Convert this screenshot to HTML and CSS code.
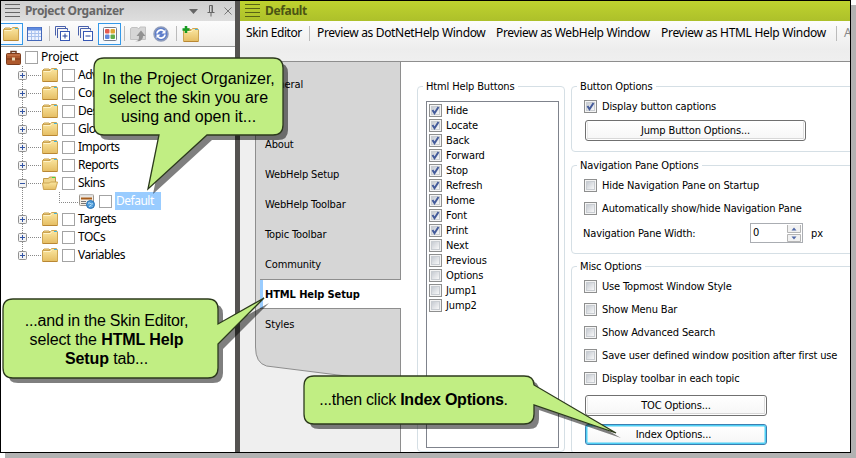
FILE: index.html
```html
<!DOCTYPE html>
<html lang="en">
<head>
<meta charset="utf-8">
<title>Skin Editor</title>
<link rel="stylesheet" href="styles.css">
</head>
<body>
<svg class="defs" aria-hidden="true">
  <defs>
    <linearGradient id="gold" x1="0" y1="0" x2="0" y2="1"><stop offset="0" stop-color="#fbe7a2"/><stop offset="1" stop-color="#e5bd62"/></linearGradient>
    <linearGradient id="box" x1="0" y1="0" x2="1" y2="1"><stop offset="0" stop-color="#c3c8cf"/><stop offset="1" stop-color="#fbfbfb"/></linearGradient>
    <symbol id="folder" viewBox="0 0 16 14"><path d="M.5 2.500 2 1h5l1.500 1.500" fill="#f3d88c" stroke="#c8a04c"/><path d="M8 2.500 9.500.5h5L15.500 2v11.500H.5v-11z" fill="url(#gold)" stroke="#cda552"/><path d="M1.500 3.500h7l1.500-2" fill="none" stroke="#fff3c8"/><path d="M12 1.500h3" stroke="#43b4dc"/><path d="M1 13.500h14" stroke="#b98734"/></symbol>
    <symbol id="open" viewBox="0 0 16 14"><path d="M1.500 12V2.500h5l1-1.500h6v5" fill="#efd58c" stroke="#c39c48"/><path d="M10 1.500h3" stroke="#3bdc45"/><path d="m.5 7 1 6.500h12l2-7.500H8.500l-1 1z" fill="url(#gold)" stroke="#cda552"/></symbol>
    <symbol id="unchecked" viewBox="0 0 13 13"><rect x=".5" y=".5" width="12" height="12" fill="#f4f4f4" stroke="#8e8f8f"/><rect x="2.500" y="2.500" width="8" height="8" fill="url(#box)" stroke="#c9cdd2"/></symbol>
    <symbol id="checked" viewBox="0 0 13 13"><use href="#unchecked"/><path d="m3.500 6 2 3.200L9.500 3" fill="none" stroke="#435a9a" stroke-width="2"/></symbol>
    <symbol id="plus" viewBox="0 0 9 9"><rect x=".5" y=".5" width="8" height="8" rx="1" fill="#f3f3f3" stroke="#919191"/><path d="M2 4.500h5M4.500 2v5" stroke="#3355a5"/></symbol>
    <symbol id="minus" viewBox="0 0 9 9"><rect x=".5" y=".5" width="8" height="8" rx="1" fill="#f3f3f3" stroke="#919191"/><path d="M2 4.500h5" stroke="#3355a5"/></symbol>
    <symbol id="pages" viewBox="0 0 16 16"><path d="M.5 9.500v-9h10v2M2.500 12V2.500h10v2" fill="none" stroke="#4961ac"/><rect x="5.500" y="5.500" width="9" height="9" fill="#fff" stroke="#3657b3"/><path d="M7.500 10h5" stroke="#234098"/></symbol>
  </defs>
</svg>
<div class="window">
  <section class="organizer">
    <header class="bar">
      <i class="grip"></i><b>Project Organizer</b>
      <svg class="caret" viewBox="0 0 9 5"><path d="M0 0h9L4.500 5z"/></svg>
      <svg class="pin" viewBox="0 0 8 12"><path d="M2.500 7V.5h3V7M5 1v6M.5 7.500h7M4 8v3.500" /></svg>
      <svg class="close" viewBox="0 0 8 8"><path d="m.5.5 7 7m0-7-7 7"/></svg>
    </header>
    <div class="tools">
      <span class="tool on first"><svg width="16" height="14"><use href="#folder"/></svg></span>
      <svg class="table" width="15" height="14" viewBox="0 0 15 14"><rect x=".5" y=".5" width="14" height="13" fill="#eef3ff" stroke="#4468b9"/><path d="M1 2h13" stroke="#5f8be0" stroke-width="3"/><path d="M4.500 3v10M8 3v10M11.500 3v10M1 6.500h13M1 9.500h13" stroke="#a9c1ed"/></svg>
      <i class="sep s1"></i>
      <svg class="pg1" width="16" height="16" viewBox="0 0 16 16"><use href="#pages"/><path d="M10 7.500v5" stroke="#234098"/></svg>
      <svg class="pg2" width="16" height="16"><use href="#pages"/></svg>
      <span class="tool on grid"><svg width="14" height="14" viewBox="0 0 14 14"><rect x=".5" y=".5" width="13" height="13" rx="1" fill="#fff" stroke="#747c8b"/><rect x="2" y="2" width="4.500" height="4.500" rx="1" fill="#e45a50"/><rect x="7.500" y="2" width="4.500" height="4.500" rx="1" fill="#dfa534"/><rect x="2" y="7.500" width="4.500" height="4.500" rx="1" fill="#6087dc"/><rect x="7.500" y="7.500" width="4.500" height="4.500" rx="1" fill="#61ad4c"/></svg></span>
      <i class="sep s2"></i>
      <svg class="up" width="17" height="16" viewBox="0 0 17 16"><path d="M.5 2.500 2 1.500h5l2 1.500 1-2h5.500v12.500H.5z" fill="#d6d6d6" stroke="#c2c2c2"/><path d="M5 15c4 0 4-2 4-5H6.500L11 4.500l4.500 5.500H13c0 4-3 6-8 5z" fill="#929292"/></svg>
      <svg class="sync" width="16" height="16" viewBox="0 0 16 16"><circle cx="8" cy="8" r="7" fill="#5d7dcb" stroke="#8e9bb9" stroke-width="1.500"/><path d="M4 7.500C4.500 3.500 9 3 11 5.500M12 8.500c-.5 4-5 4.500-7 2" fill="none" stroke="#fff" stroke-width="1.700"/><path d="M12.500 3.500v4h-4zM3.500 12.500v-4h4z" fill="#fff"/></svg>
      <i class="sep s3"></i>
      <svg class="new" width="17" height="16" viewBox="0 0 17 16"><use href="#folder" x="1" y="2" width="16" height="14"/><path d="M4 0v7M.5 3.500h7" stroke="#169b22" stroke-width="2.500"/></svg>
    </div>
    <div class="tree">
      <div class="root"><svg width="15" height="15" viewBox="0 0 15 15"><path d="M5 4V1.500h5V4" fill="none" stroke="#6c3c22" stroke-width="1.500"/><rect x=".5" y="3.500" width="14" height="11" rx="1" fill="#ad582c" stroke="#7d3c1d"/><path d="M1 5h13" stroke="#cf8356"/><path d="M1 9h13" stroke="#713416"/><path d="M6 7.500h3v3H6z" fill="#ead7b2"/></svg><i class="cb"></i><span>Project</span></div>
      <div class="branch">
        <div class="node"><svg class="exp"><use href="#plus"/></svg><i class="dots"></i><svg class="fold"><use href="#folder"/></svg><i class="cb"></i><span>Adv</span></div>
        <div class="node"><svg class="exp"><use href="#plus"/></svg><i class="dots"></i><svg class="fold"><use href="#folder"/></svg><i class="cb"></i><span>Con</span></div>
        <div class="node"><svg class="exp"><use href="#plus"/></svg><i class="dots"></i><svg class="fold"><use href="#folder"/></svg><i class="cb"></i><span>Des</span></div>
        <div class="node"><svg class="exp"><use href="#plus"/></svg><i class="dots"></i><svg class="fold"><use href="#folder"/></svg><i class="cb"></i><span>Glo</span></div>
        <div class="node"><svg class="exp"><use href="#plus"/></svg><i class="dots"></i><svg class="fold"><use href="#folder"/></svg><i class="cb"></i><span>Imports</span></div>
        <div class="node"><svg class="exp"><use href="#plus"/></svg><i class="dots"></i><svg class="fold"><use href="#folder"/></svg><i class="cb"></i><span>Reports</span></div>
        <div class="node"><svg class="exp"><use href="#minus"/></svg><i class="dots"></i><svg class="fold"><use href="#open"/></svg><i class="cb"></i><span>Skins</span></div>
        <div class="leaf"><i class="elbow"></i><svg width="16" height="16" viewBox="0 0 16 16"><rect x=".5" y="1.500" width="14" height="11" rx="1" fill="#f5efe6" stroke="#9a948c"/><path d="M1 2.500h13" stroke="#ddd" stroke-width="2"/><path d="M2 5.500h11" stroke="#a65c1c" stroke-width="2"/><path d="M2 8.500h5M2 10.500h5" stroke="#777"/><circle cx="11.500" cy="11.500" r="4" fill="#4d9bd8" stroke="#2c73b4"/><path d="M9 10.500c2-2 3 2 5 0M10 13.500l2-1 1 1" fill="none" stroke="#d6f0ff"/></svg><i class="cb"></i><span class="sel">Default</span></div>
        <div class="node"><svg class="exp"><use href="#plus"/></svg><i class="dots"></i><svg class="fold"><use href="#folder"/></svg><i class="cb"></i><span>Targets</span></div>
        <div class="node"><svg class="exp"><use href="#plus"/></svg><i class="dots"></i><svg class="fold"><use href="#folder"/></svg><i class="cb"></i><span>TOCs</span></div>
        <div class="node"><svg class="exp"><use href="#plus"/></svg><i class="dots"></i><svg class="fold"><use href="#folder"/></svg><i class="cb"></i><span>Variables</span></div>
      </div>
    </div>
  </section>
  <div class="splitter"></div>
  <section class="editor">
    <header class="bar green"><i class="grip"></i><b>Default</b></header>
    <nav class="commands"><span class="c1">Skin Editor</span><i></i><span class="c2">Preview as DotNetHelp Window</span><span class="c3">Preview as WebHelp Window</span><span class="c4">Preview as HTML Help Window</span><i></i><span class="dim">A</span></nav>
    <div class="body">
      <div class="tabs">
        <svg class="tabshape" width="161" height="390" viewBox="0 0 161 390"><path d="M15.500-1v286q0 16 11 19L110 314.500l50.500 6V-1z" fill="#d6d6d6" stroke="#8e8e8e"/><path d="M160.500 310v80" stroke="#8e8e8e"/></svg>
        <div class="tablist"><span>General</span><span class="blank"></span><span>About</span><span class="t4">WebHelp Setup</span><span class="t5">WebHelp Toolbar</span><span class="t6">Topic Toolbar</span><span>Community</span><span class="active">HTML Help Setup</span><span>Styles</span></div>
      </div>
      <div class="page">
        <fieldset class="buttons"><legend>Html Help Buttons</legend>
          <div class="list">
            <label><svg><use href="#checked"/></svg>Hide</label><label><svg><use href="#checked"/></svg>Locate</label><label><svg><use href="#checked"/></svg>Back</label><label><svg><use href="#checked"/></svg>Forward</label><label><svg><use href="#checked"/></svg>Stop</label><label><svg><use href="#checked"/></svg>Refresh</label><label><svg><use href="#checked"/></svg>Home</label><label><svg><use href="#checked"/></svg>Font</label><label><svg><use href="#checked"/></svg>Print</label><label><svg><use href="#unchecked"/></svg>Next</label><label><svg><use href="#unchecked"/></svg>Previous</label><label><svg><use href="#unchecked"/></svg>Options</label><label><svg><use href="#unchecked"/></svg>Jump1</label><label><svg><use href="#unchecked"/></svg>Jump2</label>
          </div>
        </fieldset>
        <div class="options">
          <fieldset class="g1"><legend>Button Options</legend>
            <label><svg><use href="#checked"/></svg>Display button captions</label>
            <div class="btn wide">Jump Button Options...</div>
          </fieldset>
          <fieldset class="g2"><legend>Navigation Pane Options</legend>
            <label><svg><use href="#unchecked"/></svg>Hide Navigation Pane on Startup</label>
            <label><svg><use href="#unchecked"/></svg>Automatically show/hide Navigation Pane</label>
            <div class="width"><span class="wl">Navigation Pane Width:</span><span class="spin">0<svg width="15" height="17" viewBox="0 0 15 17"><path d="M.5 0v7.500h13V0M.5 9.500h13v7H.5z" fill="#f1f1f1" stroke="#b5b5b5"/><path d="m4.500 5.500 2.500-3 2.500 3zM4.500 11.500l2.500 3 2.500-3z" fill="#5169a8"/></svg></span><span>px</span></div>
          </fieldset>
          <fieldset class="g3"><legend>Misc Options</legend>
            <label><svg><use href="#unchecked"/></svg>Use Topmost Window Style</label>
            <label><svg><use href="#unchecked"/></svg>Show Menu Bar</label>
            <label><svg><use href="#unchecked"/></svg>Show Advanced Search</label>
            <label><svg><use href="#unchecked"/></svg>Save user defined window position after first use</label>
            <label><svg><use href="#unchecked"/></svg>Display toolbar in each topic</label>
            <div class="btn">TOC Options...</div>
            <div class="btn focus">Index Options...</div>
          </fieldset>
        </div>
      </div>
    </div>
  </section>
</div>
<div class="callout one">
  <svg width="200" height="145"><path class="sh" d="M11 1H180q10 0 10 10V68q0 10-10 10H114L55 132 66 78H11Q1 78 1 68V11Q1 1 11 1z"/><path class="sp" d="M11 1H180q10 0 10 10V68q0 10-10 10H114L55 132 66 78H11Q1 78 1 68V11Q1 1 11 1z"/></svg>
  <p><span class="a1">In the Project Organizer,</span><br><span class="a2">select the skin you are</span><br><span class="a3">using and open it...</span></p>
</div>
<div class="callout two">
  <svg width="275" height="90"><path class="sh" d="M11 1H206q10 0 10 10V26L262 0 216 46V70q0 10-10 10H11Q1 80 1 70V11Q1 1 11 1z"/><path class="sp" d="M11 1H206q10 0 10 10V26L262 0 216 46V70q0 10-10 10H11Q1 80 1 70V11Q1 1 11 1z"/></svg>
  <p><span class="b1">...and in the Skin Editor,</span><br><span class="b2">select the <b>HTML Help</b></span><br><span class="b3"><b>Setup</b> tab...</span></p>
</div>
<div class="callout three">
  <svg width="325" height="70"><path class="sh" d="M11 1H221q10 0 10 9L313 58 231 30V39q0 10-10 10H11Q1 49 1 39V11Q1 1 11 1z"/><path class="sp" d="M11 1H221q10 0 10 9L313 58 231 30V39q0 10-10 10H11Q1 49 1 39V11Q1 1 11 1z"/></svg>
  <p>...then click <b>Index Options</b>.</p>
</div>
</body>
</html>
```
FILE: styles.css
```css
* { box-sizing: border-box; }
body { margin: 0; width: 856px; height: 458px; overflow: hidden; position: relative; background: #fff; color: #000; font: 11px/15px "DejaVu Sans Condensed", "DejaVu Sans", sans-serif; font-stretch: condensed; letter-spacing: -.14px; white-space: nowrap; }
svg { display: block; flex: none; }
i { display: block; flex: none; }
.defs { position: absolute; width: 0; height: 0; }
.window { display: flex; width: 851px; height: 453px; border: 1px solid #000; box-shadow: 5px 5px 0 #b2b2b2; overflow: hidden; background: #fff; }
.organizer { width: 234px; flex: none; font: 12px/18px "Noto Sans", sans-serif; }
.splitter { width: 5px; flex: none; background: #555351; }
.editor { width: 610px; flex: none; display: flex; flex-direction: column; }

.bar { height: 20px; flex: none; display: flex; align-items: center; background: linear-gradient(#cfcfcf, #dedede); color: #666; font: 12px/20px "Noto Sans", sans-serif; padding-left: 4px; }
.bar b { margin-left: 5px; width: 164px; letter-spacing: -.35px; }
.bar.green { background: linear-gradient(#bfd32f, #adc02a); color: #4b5413; padding-left: 5px; }
.grip { width: 15px; height: 14px; background: repeating-linear-gradient(#666 0 1px, transparent 1px 4px); }
.green .grip { background: repeating-linear-gradient(#596315 0 1px, transparent 1px 4px); }
.caret { width: 9px; height: 5px; fill: #666; }
.pin { width: 8px; height: 12px; margin-left: 9px; fill: none; stroke: #666; }
.close { width: 8px; height: 8px; margin-left: 9px; fill: none; stroke: #777; }

.tools { height: 26px; display: flex; align-items: center; background: linear-gradient(#fcfcfc, #efefef); border-bottom: 1px solid #999; }
.tool { display: flex; align-items: center; justify-content: center; height: 22px; width: 23px; border: 1px solid #3498e8; background: #f5faff; }
.first { width: 22px; border-left: 0; padding-right: 1px; }
.table { margin-left: 4px; }
.sep { width: 1px; height: 15px; background: #bbb; }
.s1 { margin-left: 7px; }
.pg1 { margin-left: 5px; }
.pg2 { margin-left: 7px; }
.grid { margin-left: 4px; }
.s2 { margin-left: 3px; }
.up { margin-left: 5px; }
.sync { margin-left: 6px; }
.s3 { margin-left: 7px; }
.new { margin-left: 5px; }

.tree { padding-top: 1px; }
.tree span { letter-spacing: -.5px; }
.root, .node, .leaf { display: flex; align-items: center; height: 18px; }
.root { padding-left: 5px; }
.root .cb { margin-left: 4px; }
.tree .root span { letter-spacing: -.25px; }
.cb { width: 13px; height: 13px; border: 1px solid #a3a3a3; background: #fff; margin: 1px 3px 0 4px; }
.branch { margin-left: 17px; background: repeating-linear-gradient(#888 0 1px, transparent 1px 2px) 4px 0 / 1px 190px no-repeat; }
.exp { width: 9px; height: 9px; margin-top: 1px; }
.dots { width: 13px; height: 1px; margin: 1px 1px 0 1px; background: repeating-linear-gradient(90deg, #888 0 1px, transparent 1px 2px); }
.fold { width: 16px; height: 14px; }
.leaf { padding-left: 41px; }
.elbow { width: 19px; height: 11px; align-self: flex-start; background: repeating-linear-gradient(#888 0 1px, transparent 1px 2px) 0 0 / 1px 11px no-repeat, repeating-linear-gradient(90deg, #888 0 1px, transparent 1px 2px) 0 10px / 19px 1px no-repeat; }
.leaf svg { margin-left: 1px; }
.sel { background: #99ccff; color: #fff; width: 46px; padding-left: 1px; height: 18px; }

.commands { height: 41px; padding: 0 0 16px 6px; flex: none; display: flex; align-items: center; background: linear-gradient(#fcfcfc, #ededed 70%, #efefef); border-bottom: 1px solid #8e8e8e; font: 12px/24px "Noto Sans", sans-serif; letter-spacing: -.33px; }
.commands span { flex: none; }
.commands i { width: 1px; height: 15px; background: #bbb; margin-right: 7px; }
.c1 { width: 63px; letter-spacing: -.4px; }
.c2 { width: 179px; }
.c3 { width: 165px; }
.c4 { width: 175px; letter-spacing: -.3px; }
.dim { color: #888; }
.body { flex: 1; display: flex; min-height: 0; }
.tabs { width: 161px; flex: none; position: relative; background: #efefef; }
.tabshape { position: absolute; left: 0; top: 0; }
.tablist { position: relative; padding: 7px 0 0 20px; display: grid; grid-auto-rows: 30px; line-height: 32px; }
.tablist span { padding-left: 5px; }
.tablist .active { background: #fff; border: solid #8e8e8e; border-width: 1px 0; box-shadow: inset 3px 0 #99ccff; font-weight: bold; height: 30px; line-height: 29px; letter-spacing: -.1px; }

.page { flex: 1; min-width: 0; display: flex; padding: 17px 0 0 16px; overflow: hidden; }
fieldset { margin: 0; padding: 0; border: 1px solid #d5dfe5; border-radius: 4px; min-width: 0; }
legend { margin-left: 5px; padding: 0 3px; height: 15px; line-height: 16px; }
.buttons { width: 148px; height: 373px; flex: none; }
.list { width: 133px; height: 347px; margin: 7px 0 0 8px; border: 1px solid #7f838c; padding: 1px 2px; }
.list label { display: flex; align-items: center; height: 15px; gap: 4px; }
label svg { width: 13px; height: 13px; }
.options { margin-left: 6px; width: 310px; flex: none; }
.options label { display: flex; align-items: center; gap: 5px; height: 23px; margin-left: 12px; }
.options fieldset { padding-top: 1px; }
.g1 { height: 73px; }
.g2 { height: 96px; margin-top: 6px; }
.g3 { height: 195px; margin-top: 5px; }
.btn { width: 182px; height: 21px; margin: 2px 0 0 13px; border: 1px solid #707070; border-radius: 3px; background: linear-gradient(#fff, #f6f6f6); box-shadow: inset 0 0 0 1px #fff, inset 0 -2px 0 #d8d8d8, inset -2px 0 #ddd, inset 2px 0 #e8e8e8; text-align: center; line-height: 20px; }
.g3 .btn { margin-top: 5px; }
.wide { width: 221px; }
.g3 .focus { margin-top: 8px; border-color: #3c7fb1; box-shadow: inset 0 0 0 1.500px #4fd0f5; padding-right: 5px; }
.width { display: flex; align-items: center; height: 20px; margin: 3px 0 0 11px; }
.wl { width: 167px; }
.spin { width: 53px; height: 20px; border: 1px solid #aaadb2; display: flex; justify-content: space-between; padding: 1px 0 0 2px; margin-right: 8px; }

.callout { position: absolute; font: 16px/19px "Liberation Sans", sans-serif; letter-spacing: 0; text-align: center; }
.callout svg { position: absolute; left: 0; top: 0; overflow: visible; }
.callout p { position: relative; margin: 0; }
.sp { fill: #c1ee83; stroke: #2c3a1c; stroke-width: 1.300; }
.sh { fill: rgba(0, 0, 0, .5); transform: translate(5px, 5px); }
.one { left: 93px; top: 57px; width: 191px; padding-top: 12px; }
.two { left: 2px; top: 298px; width: 209px; padding-top: 13px; }
.b1 { letter-spacing: -.22px; }
.b2, .b3 { letter-spacing: -.12px; }
.three { left: 303px; top: 375px; width: 221px; padding-top: 15px; letter-spacing: -.25px; }
```
